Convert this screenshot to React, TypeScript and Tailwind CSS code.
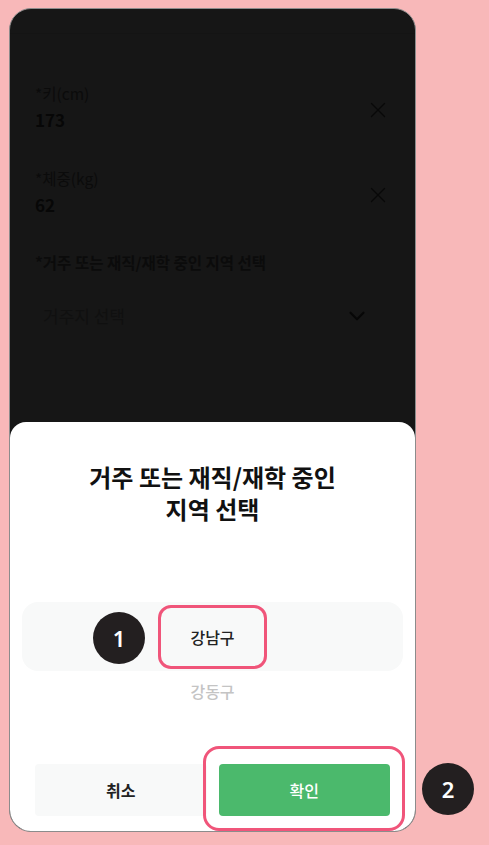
import React from 'react';
import { X, ChevronDown } from 'lucide-react';

const font = "font-['Noto_Sans_CJK_KR','Noto_Sans',sans-serif]";

// the form sits behind a dim layer, so its colours are already the dimmed ones
function Field({ label, value }: { label: string; value: string }) {
  return (
    <div className="flex items-center justify-between">
      <div className="flex flex-col gap-[5px]">
        <span className="text-[15.5px] leading-5 text-[#0b0b0b]">{label}</span>
        <span className="text-[17px] leading-6 font-semibold text-[#070707]">{value}</span>
      </div>
      <X className="h-[26px] w-[26px] -mr-[6px] mt-[4px] text-[#080808]" strokeWidth={1.3} />
    </div>
  );
}

export default function App() {
  return (
    <div className={`relative min-h-[845px] w-full bg-[#f8b8b9] pt-[8px] pl-[9px] ${font}`}>
      {/* phone frame */}
      <div className="relative h-[824px] w-[407px] overflow-hidden rounded-[22px] border border-[#8c8c8c] bg-[#161616]">
        {/* dimmed form */}
        <div className="h-[25px] border-b border-[#141414]" />
        <div className="flex flex-col pl-[25px] pr-[30px] pt-[49px]">
          <Field label="*키(cm)" value="173" />
          <div className="h-[36px]" />
          <Field label="*체중(kg)" value="62" />
          <div className="mt-[34px] text-[15.5px] leading-[22px] font-semibold text-[#0b0b0b]">
            *거주 또는 재직/재학 중인 지역 선택
          </div>
          <div className="mt-[19px] mr-[12px] flex h-[48px] items-center justify-between pl-[8px] pr-[3px]">
            <span className="text-[17px] text-[#101010]">거주지 선택</span>
            <ChevronDown className="h-[26px] w-[26px] text-[#070707]" strokeWidth={2} />
          </div>
        </div>

        {/* bottom sheet */}
        <div className="absolute inset-x-0 bottom-0 h-[409px] rounded-t-[16px] bg-white flex flex-col">
          <h2 className="pt-[39px] text-center text-[24px] leading-[32px] font-bold text-[#111]">
            거주 또는 재직/재학 중인
            <br />
            지역 선택
          </h2>
          <div className="mt-[77px] mx-[12px] flex h-[69px] items-center justify-center rounded-[16px] bg-[#f8f9f9]">
            <span className="text-[16px] font-medium text-[#222]">강남구</span>
          </div>
          <div className="flex h-[40px] items-center justify-center">
            <span className="text-[16px] font-medium text-[#c4c4c4]">강동구</span>
          </div>
          <div className="mt-[53px] grid grid-cols-2 gap-[12px] px-[25px]">
            <button className="h-[52px] rounded bg-[#f8f9f9] text-[16px] font-bold text-[#222]">취소</button>
            <button className="h-[52px] rounded bg-[#4bb96c] text-[16px] font-medium text-white">확인</button>
          </div>
        </div>
      </div>

      {/* annotations */}
      <div className="absolute left-[158px] top-[605px] h-[64px] w-[109px] rounded-[13px] border-[3px] border-[#f0557a]" />
      <div className="absolute left-[203px] top-[746px] h-[85px] w-[202px] rounded-[16px] border-[3px] border-[#f0557a]" />
      <div className="absolute left-[93px] top-[612px] flex h-[52px] w-[52px] items-center justify-center rounded-full bg-[#231f20] text-[22px] font-semibold text-white font-['Noto_Sans',sans-serif]">
        1
      </div>
      <div className="absolute left-[422px] top-[763px] flex h-[52px] w-[52px] items-center justify-center rounded-full bg-[#231f20] text-[22px] font-semibold text-white font-['Noto_Sans',sans-serif]">
        2
      </div>
    </div>
  );
}
